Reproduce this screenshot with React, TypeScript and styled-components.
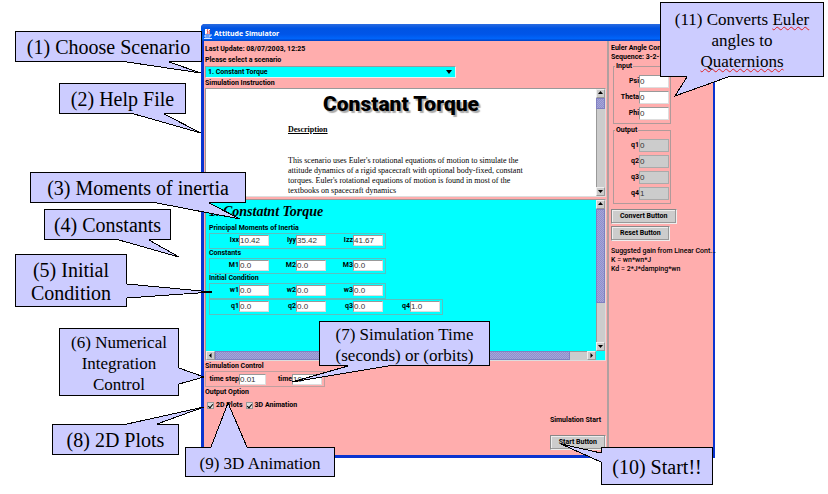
import React from "react";
import styled, { createGlobalStyle, css } from "styled-components";

const PINK = "#ffadad";
const CYAN = "#00ffff";
const LAVENDER = "#ccccff";
const GREY = "#cccccc";

const Global = createGlobalStyle`
  * { box-sizing: border-box; }
  body { margin: 0; background: #fff; }
  button, input, select { font: inherit; color: inherit; margin: 0; padding: 0; border-radius: 0; }
`;

const Page = styled.div`
  position: relative;
  display: flex;
  min-height: 100vh;
  padding: 24px 113px 36px 201px;
  overflow: hidden;
`;

const Window = styled.main`
  flex: 1;
  min-width: 0;
  display: flex;
  flex-direction: column;
  border: solid #0a34d0;
  border-width: 0 2px 3px 3px;
  border-radius: 4px 4px 0 0;
  background: ${PINK};
  color: #000;
  font: bold 7px/9px Roboto, "Liberation Sans", Arial, sans-serif;
`;

const TitleBar = styled.header`
  display: flex;
  align-items: center;
  gap: 2px;
  height: 17px;
  margin-left: -3px;
  margin-right: -2px;
  padding: 2px 0 0 3px;
  border-radius: 4px 4px 0 0;
  background: linear-gradient(#2a6be0, #0054e3 25%, #0055e8 60%, #0064fa 85%, #0040c0);
  color: #fff;
  font: bold 7px/12px "Noto Sans", sans-serif;
`;

const Title = styled.h1`
  margin: 0;
  font: inherit;
`;

const Panels = styled.div`
  flex: 1;
  min-height: 0;
  display: grid;
  grid-template-columns: minmax(0, 1fr) 106px;
`;

const MainPanel = styled.section`
  display: flex;
  flex-direction: column;
  min-width: 0;
  padding: 4px 1px 5px;
`;

const SidePanel = styled.aside`
  min-width: 0;
  padding: 3px 0 0 2px;
  border-left: 2px solid #b0a0a0;
`;

const Line = styled.div<{ $top?: number }>`
  margin-top: ${(p) => p.$top ?? 0}px;
  white-space: nowrap;
`;

const GainNote = styled(Line)`
  font-weight: 500;
`;

const ScenarioLabel = styled.label`
  display: block;
  margin-top: 2px;
`;

const SelectBox = styled.div`
  display: flex;
  align-items: center;
  position: relative;
  width: 251px;
  height: 12px;
  margin: 1px 0;
  border: 1px solid #999;
  border-color: #999 #eee #eee #999;
  background: ${CYAN};
`;

const Select = styled.select`
  appearance: none;
  width: 100%;
  height: 10px;
  padding-left: 2px;
  border: 0;
  background: transparent;
  line-height: 10px;
`;

const SelectArrow = styled.svg`
  position: absolute;
  right: 3px;
  pointer-events: none;
`;

const Pane = styled.div<{ $form?: boolean }>`
  flex: ${(p) => (p.$form ? 3 : 2)} 1 0;
  min-height: 0;
  display: grid;
  grid-template-columns: minmax(0, 1fr) 9px;
  grid-template-rows: minmax(0, 1fr) ${(p) => (p.$form ? "9px" : "")};
  margin-top: ${(p) => (p.$form ? 2 : 0)}px;
  border: 1px solid #999;
  border-right-color: #ddd;
  border-bottom-color: #ddd;
  background: ${(p) => (p.$form ? CYAN : "#fff")};
`;

const Article = styled.article`
  overflow: hidden;
  font-family: "Liberation Serif", serif;
  font-weight: normal;
`;

const ArticleTitle = styled.h2`
  margin: 0;
  text-align: center;
  font: 900 21px/30px Roboto, "Liberation Sans", sans-serif;
  text-shadow: 2px 2px 1px #aaa;
`;

const Description = styled.h3`
  margin: 6px 0 21px 82px;
  font-size: 8px;
  line-height: 10px;
  text-decoration: underline;
`;

const Paragraph = styled.p`
  margin: 0 0 0 82px;
  font-size: 8px;
  line-height: 10px;
  white-space: pre-line;
`;

const Bar = styled.div<{ $row?: boolean }>`
  display: flex;
  flex-direction: ${(p) => (p.$row ? "row" : "column")};
  background: ${GREY};
  box-shadow: inset 1px 1px 0 #999;
`;

const BarButton = styled.button`
  flex: none;
  width: 9px;
  height: 9px;
  display: grid;
  place-items: center;
  border: 1px solid #999;
  border-top-color: #eee;
  border-left-color: #eee;
  background: ${GREY};
`;

const Space = styled.div<{ $grow: number }>`
  flex: ${(p) => p.$grow};
`;

const Thumb = styled.div<{ $grow: number }>`
  flex: ${(p) => p.$grow};
  border: 1px solid #8080c0;
  background: repeating-conic-gradient(#9090c8 0 25%, #a4a4dc 0 50%) 0 0 / 2px 2px;
`;

const FormBody = styled.form`
  overflow: hidden;
  padding: 3px 0 0 3px;
`;

const FormTitle = styled.h2`
  margin: 0 0 3px;
  font: italic bold 14px/18px "Liberation Serif", serif;
`;

const Group = styled.div`
  display: flex;
  width: max-content;
  height: 16px;
  padding: 2px 2px 2px 0;
  border: 1px solid rgba(150, 150, 150, 0.6);
`;

const Field = styled.label<{ $wide?: number }>`
  display: flex;
  align-items: center;
  justify-content: flex-end;
  width: ${(p) => p.$wide ?? 57}px;
  white-space: nowrap;
`;

const fieldBorder = css`
  border: 1px solid #999;
  border-right-color: #ddd;
  border-bottom-color: #ddd;
`;

const TextInput = styled.input<{ $width?: number }>`
  flex: none;
  width: ${(p) => p.$width ?? 30}px;
  height: 11px;
  ${fieldBorder}
  background: #fff;
  color: #333;
  font: normal 8px/9px "Liberation Sans", sans-serif;
`;

const SideInput = styled(TextInput)`
  height: 13px;
  &:read-only { background: ${GREY}; border: 1px solid #aaa; }
`;

const SideGroup = styled.fieldset`
  width: 58px;
  margin: 0 0 2px 2px;
  padding: 4px 1px 3px 0;
  border: 1px solid #b09a9a;
  display: flex;
  flex-direction: column;
  gap: 3px;
`;

const Legend = styled.legend`
  margin-left: 1px;
  padding: 0 1px;
`;

const PushButton = styled.button`
  display: block;
  height: 15px;
  padding: 0 8px;
  border: 1px solid #888;
  border-right-color: #eee;
  border-bottom-color: #eee;
  background: ${GREY};
  box-shadow: inset -1px -1px 0 #999, inset 1px 1px 0 #eee;
  white-space: nowrap;
`;

const SideButton = styled(PushButton)`
  margin-top: 2px;
`;

const SideActions = styled.div`
  padding: 1px 0 0;
`;

const StartButton = styled(PushButton)`
  align-self: flex-end;
  margin-top: 10px;
`;

const StartLabel = styled.div`
  margin: 6px 5px 0 0;
  text-align: right;
`;

const Options = styled.div`
  display: flex;
  gap: 3px;
  height: 10px;
  margin: 3px 0 0 2px;
`;

const Option = styled.label`
  display: flex;
  align-items: center;
  gap: 2px;
`;

const Check = styled.input`
  appearance: none;
  width: 7px;
  height: 7px;
  display: grid;
  place-items: center;
  border: 1px solid #999;
  background: #ddd;
  &:checked::after {
    content: "";
    width: 2px;
    height: 4px;
    border: solid #000;
    border-width: 0 1px 1px 0;
    transform: rotate(40deg);
  }
`;

const Note = styled.aside<{ $x: number; $y: number; $w: number; $h: number; $small?: boolean; $right?: boolean }>`
  position: absolute;
  ${(p) => (p.$right ? "right" : "left")}: ${(p) => p.$x}px;
  top: ${(p) => p.$y}px;
  width: ${(p) => p.$w}px;
  height: ${(p) => p.$h}px;
  display: grid;
  place-content: center;
  border: 1px solid #000;
  background: ${LAVENDER};
  color: #000;
  text-align: center;
  white-space: pre;
  font-family: "Liberation Serif", serif;
  font-size: ${(p) => (p.$small ? 17 : 20)}px;
  line-height: ${(p) => (p.$small ? 21 : 23)}px;
`;

const Tail = styled.svg`
  position: absolute;
  left: -1px;
  top: -1px;
  width: 1px;
  height: 1px;
  overflow: visible;
  pointer-events: none;
`;

const NoteText = styled.span`
  position: relative;
  padding-top: 2px;
`;

const Misspelt = styled.span`
  text-decoration: underline wavy #e02020 1px;
  text-underline-offset: 1px;
  text-decoration-skip-ink: none;
`;

type Pt = [number, number];
interface CalloutProps {
  x: number; y: number; w: number; h: number;
  tail: [Pt, Pt, Pt];
  small?: boolean; right?: boolean;
  children: React.ReactNode;
}

/* Tail points are relative to the corner of the box: base, tip, base. */
function Callout({ x, y, w, h, tail, small, right, children }: CalloutProps) {
  const points = tail.map((p) => p.join(",")).join(" ");
  return (
    <Note $x={x} $y={y} $w={w} $h={h} $small={small} $right={right}>
      <Tail aria-hidden="true">
        <polygon points={points} fill={LAVENDER} />
        <line x1={tail[0][0]} y1={tail[0][1]} x2={tail[2][0]} y2={tail[2][1]} stroke={LAVENDER} strokeWidth="2" />
        <polyline points={points} fill="none" stroke="#000" shapeRendering="crispEdges" />
      </Tail>
      <NoteText>{children}</NoteText>
    </Note>
  );
}

const arrows = { up: "M0 3L2.5 0L5 3Z", down: "M0 1L2.5 4L5 1Z", left: "M3.5 0L1 2.5L3.5 5Z", right: "M1.5 0L4 2.5L1.5 5Z" };

function Arrow({ to }: { to: keyof typeof arrows }) {
  return (
    <BarButton type="button" aria-label={`Scroll ${to}`}>
      <svg width="5" height="5" viewBox="0 0 5 5"><path d={arrows[to]} /></svg>
    </BarButton>
  );
}

function ValueRow({ values }: { values: [string, string][] }) {
  return (
    <Group>
      {values.map(([name, value], i) => (
        <Field key={name} $wide={i === 0 ? 59 : 57}>
          {name}
          <TextInput defaultValue={value} />
        </Field>
      ))}
    </Group>
  );
}

function SideFields({ title, values, readOnly }: { title: string; values: [string, string][]; readOnly?: boolean }) {
  return (
    <SideGroup>
      <Legend>{title}</Legend>
      {values.map(([name, value]) => (
        <Field key={name} $wide={55}>
          {name}
          <SideInput defaultValue={value} readOnly={readOnly} />
        </Field>
      ))}
    </SideGroup>
  );
}

export default function App() {
  return (
    <Page>
      <Global />
      <Window>
        <TitleBar>
          <svg width="8" height="10" viewBox="0 0 8 10" fill="none" aria-hidden="true">
            <path d="M1 0h5v5H1z" fill="#fff" />
            <path d="M4 0C2 2 5 2 3 5M6 1C4 3 6 3 5 5" stroke="#e04040" />
            <path d="M1 6h5v2H1zM6 6h2M0 9.5h8" stroke="#d8e4ff" />
          </svg>
          <Title>Attitude Simulator</Title>
        </TitleBar>
        <Panels>
          <MainPanel>
            <Line>Last Update: 08/07/2003, 12:25</Line>
            <ScenarioLabel htmlFor="scenario">Please select a scenario</ScenarioLabel>
            <SelectBox>
              <Select id="scenario"><option>1. Constant Torque</option></Select>
              <SelectArrow width="6" height="4" viewBox="0 0 6 4"><path d="M0 0H6L3 4Z" /></SelectArrow>
            </SelectBox>
            <Line>Simulation Instruction</Line>
            <Pane>
              <Article>
                <ArticleTitle>Constant Torque</ArticleTitle>
                <Description>Description</Description>
                <Paragraph>
                  {"This scenario uses Euler's rotational equations of motion to simulate the\nattitude dynamics of a rigid spacecraft with optional body-fixed, constant\ntorques. Euler's rotational equations of motion is found in most of the\ntextbooks on spacecraft dynamics"}
                </Paragraph>
              </Article>
              <Bar><Arrow to="up" /><Thumb $grow={9} /><Space $grow={80} /><Arrow to="down" /></Bar>
            </Pane>
            <Pane $form>
              <FormBody>
                <FormTitle>1. Constatnt Torque</FormTitle>
                <Line>Principal Moments of Inertia</Line>
                <ValueRow values={[["Ixx", "10.42"], ["Iyy", "35.42"], ["Izz", "41.67"]]} />
                <Line>Constants</Line>
                <ValueRow values={[["M1", "0.0"], ["M2", "0.0"], ["M3", "0.0"]]} />
                <Line>Initial Condition</Line>
                <ValueRow values={[["w1", "0.0"], ["w2", "0.0"], ["w3", "0.0"]]} />
                <ValueRow values={[["q1", "0.0"], ["q2", "0.0"], ["q3", "0.0"], ["q4", "1.0"]]} />
              </FormBody>
              <Bar><Arrow to="up" /><Thumb $grow={95} /><Space $grow={40} /><Arrow to="down" /></Bar>
              <Bar $row><Arrow to="left" /><Thumb $grow={358} /><Space $grow={17} /><Arrow to="right" /></Bar>
            </Pane>
            <Line $top={1}>Simulation Control</Line>
            <Group>
              <Field $wide={60}>time step<TextInput $width={27} defaultValue="0.01" /></Field>
              <Field $wide={56}>time<TextInput defaultValue="10" /></Field>
            </Group>
            <Line $top={1}>Output Option</Line>
            <Options>
              <Option><Check type="checkbox" defaultChecked />2D Plots</Option>
              <Option><Check type="checkbox" defaultChecked />3D Animation</Option>
            </Options>
            <StartLabel>Simulation Start</StartLabel>
            <StartButton type="button">Start Button</StartButton>
          </MainPanel>
          <SidePanel>
            <Line>Euler Angle Con...</Line>
            <Line>Sequence: 3-2-1</Line>
            <SideFields title="Input" values={[["Psi", "0"], ["Theta", "0"], ["Phi", "0"]]} />
            <SideFields title="Output" readOnly values={[["q1", "0"], ["q2", "0"], ["q3", "0"], ["q4", "1"]]} />
            <SideActions>
              <SideButton type="button">Convert Button</SideButton>
              <SideButton type="button">Reset Button</SideButton>
            </SideActions>
            <GainNote $top={6}>Suggsted gain from Linear Cont...</GainNote>
            <GainNote>K = wn*wn*J</GainNote>
            <GainNote>Kd = 2*J*damping*wn</GainNote>
          </SidePanel>
        </Panels>
      </Window>

      <Callout x={15} y={31} w={187} h={31} tail={[[112, 31], [186, 42], [154, 31]]}>(1) Choose Scenario</Callout>
      <Callout x={59} y={83} w={127} h={31} tail={[[75, 31], [142, 50], [105, 31]]}>(2) Help File</Callout>
      <Callout x={30} y={172} w={216} h={31} tail={[[127, 31], [210, 47], [179, 31]]}>(3) Moments of inertia</Callout>
      <Callout x={44} y={209} w={127} h={31} tail={[[75, 31], [135, 48], [105, 31]]}>(4) Constants</Callout>
      <Callout x={15} y={254} w={112} h={53} tail={[[112, 30], [197, 38], [112, 44]]}>{"(5) Initial\nCondition"}</Callout>
      <Callout small x={59} y={328} w={120} h={68} tail={[[120, 40], [145, 49], [120, 56]]}>{"(6) Numerical\nIntegration\nControl"}</Callout>
      <Callout small x={319} y={321} w={171} h={45} tail={[[29, 45], [-27, 61], [69, 45]]}>{"(7) Simulation Time\n(seconds) or (orbits)"}</Callout>
      <Callout x={52} y={424} w={127} h={31} tail={[[75, 0], [152, -17], [105, 0]]}>(8) 2D Plots</Callout>
      <Callout small x={185} y={447} w={150} h={30} tail={[[26, 0], [43, -44], [62, 0]]}>(9) 3D Animation</Callout>
      <Callout right x={115} y={447} w={112} h={38} tail={[[0, 6], [-40, -3], [0, 15]]}>(10) Start!!</Callout>
      <Callout small right x={4} y={2} w={164} h={75} tail={[[27, 75], [15, 94], [68, 75]]}>
        (11) Converts <Misspelt>Euler</Misspelt>{"\nangles to\n"}<Misspelt>Quaternions</Misspelt>
      </Callout>
    </Page>
  );
}
